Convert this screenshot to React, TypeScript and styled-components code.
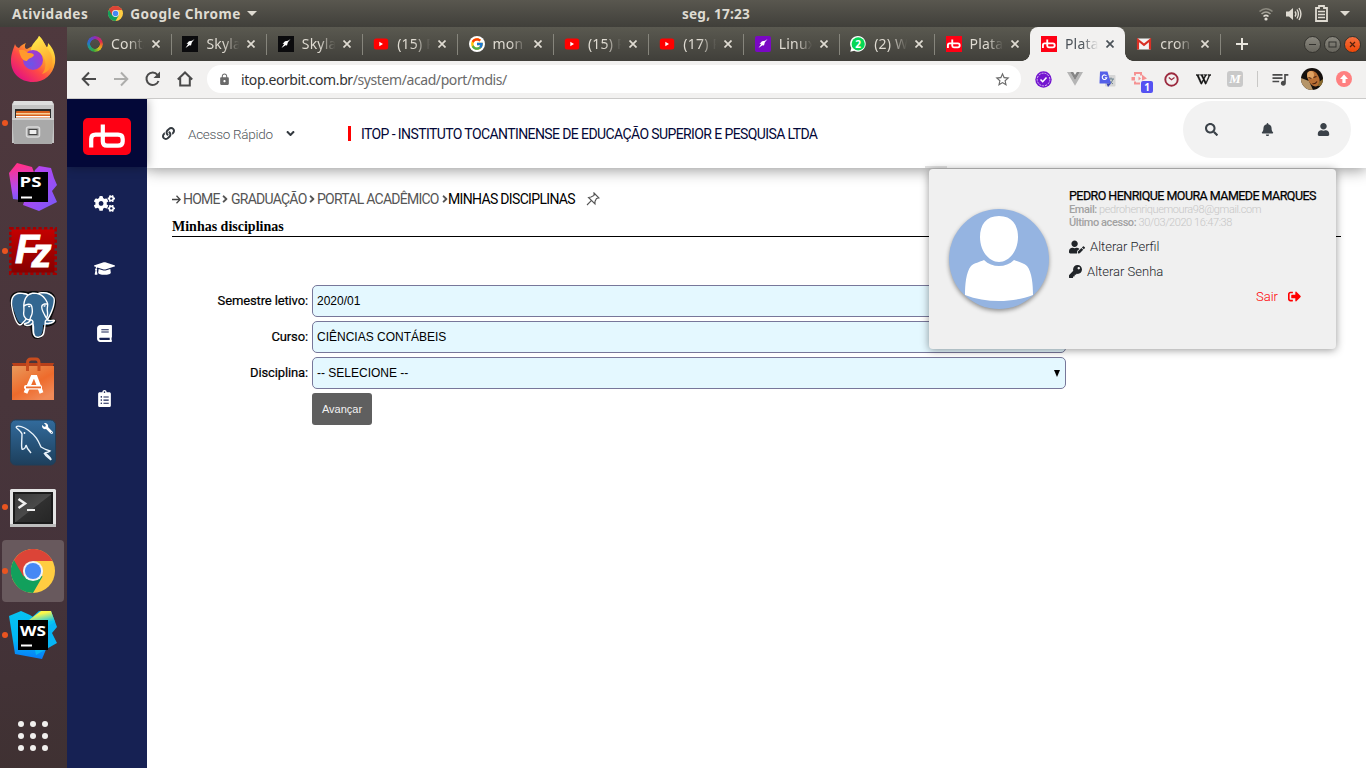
import React from 'react';
import styled, { createGlobalStyle } from 'styled-components';
import {
  FaLink, FaAngleDown, FaAngleRight, FaSearch, FaBell, FaUser, FaUserEdit, FaKey,
  FaSignOutAlt, FaCogs, FaGraduationCap, FaBook, FaClipboardList, FaWrench,
} from 'react-icons/fa';
import { MdStarBorder, MdLock, MdQueueMusic } from 'react-icons/md';
import { SiPostgresql, SiWikipedia } from 'react-icons/si';
import { FcGoogle } from 'react-icons/fc';

const Global = createGlobalStyle`
  * { box-sizing: border-box; }
  body { margin: 0; overflow: hidden; background: #fff; }
  svg { display: block; flex: none; }
`;

const UI = '"Noto Sans", "Open Sans", sans-serif';

/* ---------- desktop ---------- */
const Desktop = styled.div`
  width: 1366px;
  height: 768px;
  display: grid;
  grid-template: 27px 741px / 67px 1299px;
  font-family: ${UI};
`;
const TopBar = styled.header`
  grid-column: 1 / 3;
  display: grid;
  grid-template-columns: 670px auto 1fr;
  align-items: center;
  padding: 0 16px 0 12px;
  background: linear-gradient(#59574f, #403f3a);
  color: #dfdbd2;
  font-size: 13.6px;
  font-weight: 700;
`;
const TopLeft = styled.div`
  display: flex;
  align-items: center;
  height: 27px;
`;
const TopLabel = styled.span<{ $ls?: number; $ml?: number }>`
  letter-spacing: ${p => p.$ls ?? 0}px;
  margin-left: ${p => p.$ml ?? 0}px;
  line-height: 27px;
  white-space: nowrap;
`;
const TopRight = styled.div`
  display: flex;
  justify-content: flex-end;
  align-items: center;
  gap: 12px;
`;
const Caret = styled.i<{ $ml?: number }>`
  border: 5px solid transparent;
  border-top-color: #dfdbd2;
  border-bottom: 0;
  margin-left: ${p => p.$ml ?? 0}px;
`;

/* ---------- dock ---------- */
const Dock = styled.nav`
  display: flex;
  flex-direction: column;
  background: linear-gradient(175deg, #4f393e 0%, #48353b 50%, #45333a 75%, #3f3132 100%);
`;
const DockItem = styled.div`
  height: 64px;
  display: flex;
  align-items: center;
  position: relative;
  padding: 1px 3px 1px 2px;
`;
const DockTile = styled.div<{ $active?: boolean }>`
  width: 62px;
  height: 62px;
  border-radius: 4px;
  display: flex;
  align-items: center;
  justify-content: center;
  background: ${p => (p.$active ? '#68595d' : 'transparent')};
`;
const RunDot = styled.i`
  position: absolute;
  left: 2px;
  top: 29px;
  width: 6px;
  height: 6px;
  border-radius: 50%;
  background: #e95420;
`;
const AppGrid = styled.div`
  margin: 54px 0 0 18px;
  display: grid;
  grid-template-columns: repeat(3, 6px);
  gap: 6px;
`;
const AppDot = styled.i`
  width: 6px;
  height: 6px;
  border-radius: 50%;
  background: #f1f0ee;
`;

/* ---------- browser ---------- */
const Browser = styled.section`
  display: grid;
  grid-template-rows: 34px 38px 669px;
`;
const TabStrip = styled.div`
  display: flex;
  padding-left: 9px;
  background: linear-gradient(#5a5950, #403f3a);
`;
const Tab = styled.div<{ $active?: boolean; $bar?: boolean }>`
  position: relative;
  width: 95.4px;
  flex: none;
  display: flex;
  align-items: center;
  padding-left: 11px;
  color: ${p => (p.$active ? '#4b5258' : '#dfdbd2')};
  background: ${p => (p.$active ? '#f2f1f0' : 'transparent')};
  border-radius: 8px 8px 0 0;
  &::after {
    content: '';
    display: ${p => (p.$bar ? 'block' : 'none')};
    position: absolute;
    right: -0.6px;
    top: 7px;
    width: 1px;
    height: 21px;
    background: #86857c;
  }
`;
const TabFoot = styled.i<{ $right?: boolean }>`
  position: absolute;
  bottom: 0;
  ${p => (p.$right ? 'right: -8px' : 'left: -8px')};
  width: 8px;
  height: 8px;
  background: radial-gradient(circle at ${p => (p.$right ? '100% 0' : '0 0')}, transparent 7.5px, #f2f1f0 8px);
`;
const TabTitle = styled.span`
  width: 34px;
  margin: 0 7px 0 8px;
  overflow: hidden;
  white-space: nowrap;
  font-size: 14px;
  line-height: 34px;
  letter-spacing: 0.2px;
  mask-image: linear-gradient(90deg, #000 50%, transparent 98%);
`;
const NewTab = styled.div`
  display: flex;
  align-items: center;
  margin-left: 15px;
  color: #e8e5dd;
`;
const WindowButtons = styled.div`
  margin-left: auto;
  display: flex;
  align-items: center;
  gap: 3px;
  padding-right: 5px;
`;
const WinButton = styled.i<{ $close?: boolean }>`
  width: 17px;
  height: 17px;
  border-radius: 50%;
  border: 1px solid #35342f;
  background: ${p => (p.$close ? 'linear-gradient(#f4703f, #ee4707)' : 'linear-gradient(#8a887f, #67655d)')};
  display: flex;
  align-items: center;
  justify-content: center;
`;
const Toolbar = styled.div`
  display: flex;
  align-items: center;
  padding: 0 6px 1px 14px;
  background: #f2f1f0;
  border-bottom: 1px solid #cbcac9;
  color: #4a4a4a;
`;
const NavIcons = styled.div`
  display: flex;
  align-items: center;
  gap: 16px;
  width: 126px;
`;
const UrlBar = styled.div`
  width: 814px;
  height: 28px;
  border-radius: 14px;
  background: #fff;
  display: flex;
  align-items: center;
  padding: 0 10px 0 11px;
  color: #6a6a6a;
  font-size: 14px;
`;
const Url = styled.span`
  flex: 1;
  margin-left: 10px;
  letter-spacing: -0.41px;
  white-space: nowrap;
`;
const Host = styled.span`
  color: #333;
`;
const Extensions = styled.div`
  flex: 1;
  display: flex;
  align-items: center;
  margin-left: 6px;
`;
const Ext = styled.div`
  width: 32px;
  flex: none;
  height: 22px;
  display: flex;
  align-items: center;
  justify-content: center;
  position: relative;
`;
const ExtBadge = styled.b`
  position: absolute;
  right: 2px;
  bottom: -3px;
  width: 12px;
  height: 12px;
  border-radius: 2px;
  background: #5552f2;
  color: #fff;
  font-size: 10px;
  line-height: 12px;
  text-align: center;
`;
const ToolDivider = styled.i`
  width: 1px;
  height: 16px;
  margin: 0 6px;
  background: #c9c8c6;
`;
const MTile = styled.i`
  width: 16px;
  height: 16px;
  border-radius: 3px;
  background: #c9c9c9;
  color: #fff;
  font: italic 700 13px/16px "Liberation Serif", serif;
  text-align: center;
`;

/* ---------- site ---------- */
const Site = styled.div`
  display: grid;
  grid-template-columns: 80px 1219px;
  font-family: Roboto, sans-serif;
  min-height: 0;
`;
const Side = styled.aside`
  background: #162153;
  display: flex;
  flex-direction: column;
`;
const LogoBox = styled.div`
  height: 68px;
  margin-bottom: 1px;
  background: #030838;
  display: flex;
  justify-content: center;
  padding-top: 19px;
  box-shadow: 0 0 10px rgba(0, 0, 0, 0.35);
  clip-path: inset(0 -12px -12px 0);
  position: relative;
  z-index: 3;
`;
const SideLink = styled.div`
  height: 65px;
  display: flex;
  align-items: center;
  justify-content: center;
  padding: 6px 5px 0 0;
  color: #fff;
`;
const Main = styled.main`
  display: flex;
  flex-direction: column;
  min-width: 0;
  background: #fff;
`;
const SiteHeader = styled.header`
  position: relative;
  z-index: 2;
  height: 69px;
  flex: none;
  display: flex;
  align-items: center;
  padding: 0 15px 0 15px;
  background: #fff;
  box-shadow: 0 2px 14px rgba(0, 0, 0, 0.42);
  clip-path: inset(0 0 -300px 0);
`;
const QuickAccess = styled.div`
  display: flex;
  align-items: center;
  width: 186px;
  color: #343a40;
`;
const QuickLabel = styled.span`
  margin: 0 11px 0 13px;
  font-size: 13.5px;
  font-weight: 300;
  letter-spacing: -0.27px;
  color: #50555a;
`;
const Company = styled.div`
  display: flex;
  align-items: center;
  font-size: 14px;
  letter-spacing: -0.6px;
  color: #030838;
  white-space: nowrap;
  &::before {
    content: '';
    width: 3px;
    height: 15px;
    margin-right: 10px;
    background: #f00;
  }
`;
const ActionPill = styled.div`
  margin: -8px 0 0 auto;
  width: 168px;
  height: 57px;
  border-radius: 28.5px;
  background: #f2f2f2;
  display: flex;
  justify-content: space-around;
  align-items: center;
  color: #3b4249;
`;
const PopTab = styled.i`
  position: absolute;
  left: 778px;
  bottom: 0;
  width: 22px;
  height: 2px;
  background: #e2e2e2;
`;
const ProfileCard = styled.section`
  position: absolute;
  left: 782px;
  top: 70px;
  width: 407px;
  height: 180px;
  border-radius: 4px;
  background: #f0f0f0;
  box-shadow: 0 1px 9px rgba(0, 0, 0, 0.42);
  display: flex;
  padding: 20px;
`;
const Avatar = styled.div`
  width: 100px;
  height: 100px;
  flex: none;
  margin: 20px 20px 0 0;
  border-radius: 50%;
  overflow: hidden;
  background: #95b4e1;
  box-shadow: 0 2px 4px rgba(0, 0, 0, 0.4);
`;
const Profile = styled.div`
  flex: 1;
  display: flex;
  flex-direction: column;
  white-space: nowrap;
`;
const ProfileName = styled.div`
  font-size: 12.5px;
  line-height: 14px;
  letter-spacing: -0.54px;
  color: #000;
  -webkit-text-stroke: 0.25px #000;
`;
const ProfileMeta = styled.div<{ $ls: number }>`
  font-size: 11px;
  line-height: 13px;
  font-weight: 300;
  letter-spacing: ${p => p.$ls}px;
  color: #c6c6c6;
`;
const MetaKey = styled.b`
  font-weight: 500;
  color: #a2a2a2;
`;
const ProfileLink = styled.div<{ $top?: number }>`
  display: flex;
  align-items: center;
  gap: 5px;
  height: 25px;
  margin-top: ${p => p.$top ?? 0}px;
  font-size: 13px;
  font-weight: 300;
  color: #212529;
`;
const LogoutLink = styled(ProfileLink)`
  align-self: flex-end;
  gap: 10px;
  margin-right: 15px;
  color: #f00;
`;
const Content = styled.div`
  padding: 22px 25px 0;
`;
const Crumbs = styled.div`
  display: flex;
  align-items: center;
  height: 18px;
  font-size: 14px;
  color: #555;
`;
const Crumb = styled.span<{ $w: number; $ml?: number; $current?: boolean }>`
  width: ${p => p.$w}px;
  flex: none;
  margin-left: ${p => p.$ml ?? 0}px;
  white-space: nowrap;
  letter-spacing: ${p => (p.$current ? -0.67 : -0.75)}px;
  color: ${p => (p.$current ? '#000' : '#555')};
`;
const CrumbSep = styled.i`
  width: 6px;
  display: flex;
  justify-content: center;
`;
const PageTitle = styled.h1`
  margin: 8px 0 0;
  height: 21px;
  width: 1169px;
  border-bottom: 1px solid #000;
  font: 700 14px/22px "Liberation Serif", serif;
  color: #000;
`;
const Form = styled.form`
  margin: 48px 0 0;
  display: grid;
  grid-template-columns: 136px 754px;
  column-gap: 4px;
  row-gap: 4px;
`;
const Label = styled.label`
  text-align: right;
  font-size: 13px;
  line-height: 31px;
  letter-spacing: -0.13px;
  color: #000;
  -webkit-text-stroke: 0.2px #000;
`;
const Field = styled.div`
  height: 32px;
  display: flex;
  align-items: center;
  justify-content: space-between;
  padding: 0 5px 0 4px;
  border: 1px solid #77779a;
  border-radius: 5px;
  background: #e4f8ff;
  font: 12px/16px "Liberation Sans", sans-serif;
  color: #000;
`;
const FieldCaret = styled.i`
  border: 3.5px solid transparent;
  border-top: 7px solid #000;
  border-bottom: 0;
`;
const Submit = styled.button`
  grid-column: 2;
  width: 60px;
  height: 32px;
  padding: 0;
  border: 0;
  border-radius: 3px;
  background: #5f5f5f;
  color: #f2f2f2;
  font: 11px "Liberation Sans", sans-serif;
`;

/* ---------- drawings ---------- */
const ChromeLogo = ({ size }: { size: number }) => (
  <svg width={size} height={size} viewBox="0 0 48 48">
    <circle cx="24" cy="24" r="24" fill="#ffcd41" />
    <path d="M24 24 L3.2 12 A24 24 0 0 0 24 48 L34.4 30Z" fill="#12a05c" />
    <path d="M24 24 L13.6 30 L3.2 12 A24 24 0 0 1 45.4 13 H24Z" fill="#dc4437" />
    <circle cx="24" cy="24" r="11" fill="#f3f3f3" />
    <circle cx="24" cy="24" r="8.8" fill="#4688f4" />
  </svg>
);
const Firefox = () => (
  <svg width="48" height="48" viewBox="0 0 48 48">
    <defs>
      <linearGradient id="ffBody" x1="0.85" y1="0.1" x2="0.2" y2="0.9">
        <stop offset="0" stopColor="#fff14a" /><stop offset="0.35" stopColor="#ffa52a" />
        <stop offset="0.65" stopColor="#ff4a45" /><stop offset="1" stopColor="#e6177c" />
      </linearGradient>
      <linearGradient id="ffFlame" x1="0" y1="0" x2="0.3" y2="1">
        <stop offset="0" stopColor="#fff44f" /><stop offset="1" stopColor="#ff9a29" />
      </linearGradient>
      <radialGradient id="ffGlobe" cx="0.4" cy="0.7">
        <stop offset="0" stopColor="#6a55ea" /><stop offset="1" stopColor="#9a3ed3" />
      </radialGradient>
    </defs>
    <path d="M6 9 C7 12 8 12 10 13 C12 10 15 9 17 8 C15 11 16 14 18 14 C23 11 27 11 30 1 C35 5 35 9 37 12 C39 13 39 9 39 8 C45 14 47 21 46 28 C44 40 35 47 24 47 C11 47 2 38 2 26 C2 19 4 15 6 9Z" fill="url(#ffBody)" />
    <path d="M22 16 C22 8 28 6 30 1 C36 8 38 13 42 19 C46 29 40 37 33 39 C40 31 37 16 22 16Z" fill="url(#ffFlame)" />
    <circle cx="24" cy="25" r="10" fill="url(#ffGlobe)" />
    <path d="M10 15 C14 14 16 15 19 18 C21 18 24 18 25 20 C24 23 19 23 18 26 C13 26 11 21 10 15Z" fill="#ff9a2d" />
  </svg>
);
const FilesIcon = () => (
  <svg width="48" height="48" viewBox="0 0 48 48">
    <path d="M5 2 H43 L45 5 V44 H3 V5Z" fill="#c4c4c4" />
    <path d="M5 2 H43 L44 6 H4Z" fill="#dedede" />
    <rect x="6" y="10" width="36" height="11" fill="#2c2c2c" />
    <rect x="7" y="12" width="34" height="8" rx="1" fill="#d9621f" />
    <rect x="7" y="14" width="34" height="1.500" fill="#f7cf9a" />
    <rect x="7" y="17" width="34" height="1.500" fill="#fff" />
    <path d="M3 19 H45 L43 45 H5Z" fill="#a9a9a9" />
    <path d="M3 19 H45 V21 H3Z" fill="#cfcfcf" />
    <rect x="17.500" y="28" width="13" height="10" rx="2" fill="#a5a5a5" stroke="#dadada" strokeWidth="1.500" />
    <rect x="20" y="30.500" width="8" height="5" fill="#eee" stroke="#444" />
  </svg>
);
const IdeText = styled.text`
  font: 700 15px "Open Sans", sans-serif;
  fill: #fff;
`;
const PhpStorm = () => (
  <svg width="48" height="48" viewBox="0 0 48 48">
    <defs><linearGradient id="psA" x1="0" y1="0" x2="1" y2="1"><stop offset="0.3" stopColor="#b345f1" /><stop offset="1" stopColor="#765af8" /></linearGradient>
    <linearGradient id="psB" x1="0.2" y1="0" x2="0.3" y2="1"><stop offset="0.1" stopColor="#ff318c" /><stop offset="0.7" stopColor="#b24bf0" /><stop offset="1" stopColor="#765af8" /></linearGradient></defs>
    <path d="M26 7 L30 3 L42 5 L45 15 L48 22 L43 28 L48 39 L30 48 L14 42Z" fill="url(#psA)" />
    <path d="M0 10 L8 0 L23 4 L26 12 L12 37 L4 36Z" fill="url(#psB)" />
    <rect x="9" y="9" width="30" height="30" fill="#000" />
    <IdeText x="10.500" y="24" textLength="22" lengthAdjust="spacingAndGlyphs">PS</IdeText>
    <rect x="12" y="33.500" width="11" height="2" fill="#fff" />
  </svg>
);
const WebStorm = () => (
  <svg width="48" height="48" viewBox="0 0 48 48">
    <defs><linearGradient id="wsA" x1="0" y1="0" x2="0" y2="1"><stop offset="0" stopColor="#07c3f2" /><stop offset="0.6" stopColor="#00b7f5" /><stop offset="1" stopColor="#087cfa" /></linearGradient>
    <linearGradient id="wsB" x1="0.3" y1="0" x2="0.7" y2="1"><stop offset="0.2" stopColor="#fcf84a" /><stop offset="0.8" stopColor="#07c3f2" /></linearGradient></defs>
    <path d="M0 5 L12 0 L21 4 L30 10 L38 36 L33 48 L6 43Z" fill="url(#wsA)" />
    <path d="M20 9 L30 0 H42 L48 16 L43 22 L48 32 L27 44Z" fill="#07b5f5" />
    <path d="M20 9 L32 0 H42 L46 11 L39 15 V9Z" fill="url(#wsB)" />
    <rect x="9" y="9" width="30" height="30" fill="#000" />
    <IdeText x="11" y="24.500" textLength="26" lengthAdjust="spacingAndGlyphs">WS</IdeText>
    <rect x="12" y="33.500" width="11" height="2" fill="#fff" />
  </svg>
);
const FzText = styled.text`
  font: italic 700 40px "Liberation Sans", sans-serif;
  fill: #fff;
  stroke: #fff;
  stroke-width: 0.8px;
`;
const FileZilla = () => (
  <svg width="48" height="48" viewBox="0 0 48 48">
    <defs><linearGradient id="fz" x1="0" y1="0" x2="0" y2="1"><stop offset="0" stopColor="#c40000" /><stop offset="1" stopColor="#860000" /></linearGradient></defs>
    <rect x="1.500" y="1.500" width="45" height="45" fill="none" stroke="#a30000" strokeWidth="3" strokeDasharray="3.2 2.400" />
    <rect x="2.500" y="2.500" width="43" height="43" fill="url(#fz)" />
    <FzText x="6" y="36">F<tspan dx="-8" dy="4">z</tspan></FzText>
  </svg>
);
const Elephant = styled.div`
  width: 48px;
  height: 48px;
  display: grid;
  place-items: center;
  > * { grid-area: 1 / 1; }
`;
const Postgres = () => (
  <Elephant>
    <svg width="48" height="48" viewBox="0 0 48 48">
      <path d="M7 2 C12 0 16 1 19 2 C24 0 28 1 30 2 C35 0 41 0 44 4 C49 10 44 20 41 28 C44 29 47 29 46 31 C43 35 38 35 35 35 C35 43 33 47 28 47 C23 47 23 41 22 34 C16 36 15 34 14 33 C8 35 6 26 3 17 C1 10 1 4 7 2Z" fill="#336791" stroke="#0b0b0b" strokeWidth="2" />
    </svg>
    <SiPostgresql size={46} color="#fff" />
  </Elephant>
);
const Software = () => (
  <svg width="48" height="48" viewBox="0 0 48 48">
    <defs><linearGradient id="bag" x1="0" y1="0" x2="0.7" y2="1"><stop offset="0" stopColor="#e99a5c" /><stop offset="0.6" stopColor="#ee6b2c" /><stop offset="1" stopColor="#f08a58" /></linearGradient></defs>
    <path d="M3 8 H45 L43 13 H5Z" fill="#b8401a" />
    <path d="M3 11 H45 V45 H3Z" fill="url(#bag)" />
    <path d="M18.500 16 V8 Q18.500 4 22 4 H27 Q30 4 30 8 V16" fill="none" stroke="#c84c1e" strokeWidth="3" />
    <path d="M16.500 38 L23.500 22 H26.500 L32.500 38" fill="none" stroke="#fff" strokeWidth="4" />
    <rect x="15" y="30" width="18" height="4.500" rx="2" fill="#fff" />
    <rect x="17" y="31.500" width="15" height="1.800" fill="#ea6a2c" />
  </svg>
);
const Workbench = () => (
  <svg width="48" height="48" viewBox="0 0 48 48">
    <defs><linearGradient id="wb" x1="0" y1="0" x2="0" y2="1"><stop offset="0" stopColor="#326b9c" /><stop offset="1" stopColor="#1d3f5c" /></linearGradient></defs>
    <rect x="1.500" y="1" width="45" height="45" rx="5" fill="url(#wb)" stroke="#213f59" />
    <path d="M7 8 C9 6 15 8 19 11 C27 17 29 21 32 28 C35 30 38 31 41 32 C39 34 37 33 36 34 C38 36 42 38 42 41 M35 34 C37 38 40 39 42 41 M7 8 C8 10 12 12 13 15 C13 22 12 26 13 30 C15 31 17 28 17 26 C18 30 20 32 22 34 M22 34 L19 30" fill="none" stroke="#e8f2fa" strokeWidth="1.400" />
    <circle cx="15.500" cy="14" r="0.900" fill="#fff" />
    <g transform="translate(33 4) scale(-1 1) translate(-11 0)"><FaWrench size={11} color="#fff" /></g>
  </svg>
);
const Terminal = () => (
  <svg width="48" height="48" viewBox="0 0 48 48">
    <defs><linearGradient id="term" x1="0" y1="0" x2="1" y2="1"><stop offset="0" stopColor="#3a3a3a" /><stop offset="0.5" stopColor="#4a4a4a" /><stop offset="0.52" stopColor="#303030" /><stop offset="1" stopColor="#262626" /></linearGradient></defs>
    <rect x="1" y="6" width="46" height="38" rx="1.500" fill="#e4e4e4" />
    <rect x="1" y="41" width="46" height="3" fill="#bdbdbd" />
    <rect x="4" y="9" width="40" height="32" fill="#1b1b1b" />
    <rect x="6" y="11" width="36" height="28" fill="url(#term)" />
    <path d="M9.500 16 L16 20.500 L9.500 25" fill="none" stroke="#eee" strokeWidth="2.500" />
    <path d="M18 27 H26" stroke="#eee" strokeWidth="2" />
  </svg>
);
const RbMark = ({ w, h, r }: { w: number; h: number; r: number }) => (
  <svg width={w} height={h} viewBox={w > 20 ? '0 0 48 37' : '3 -3 43 43'}>
    {w > 20 ? <rect width="48" height="37" rx={r} fill="#ff0014" /> : <rect x="3" y="-3" width="43" height="43" rx={r} fill="#ff0014" />}
    <path d="M8.200 29.500 V21 Q8.200 16.700 12.500 16.700 H35 Q39.700 16.700 39.700 21 V23.500 Q39.700 27.700 35 27.700 H24 Q19.800 27.700 19.800 23.500 V6.500" fill="none" stroke="#fff" strokeWidth={w > 20 ? 4.2 : 5} />
  </svg>
);

/* ---------- favicons ---------- */
const RingFav = styled.i`
  width: 16px;
  height: 16px;
  border-radius: 50%;
  background: conic-gradient(#8e2bb8, #e02b4a 70deg, #f08a1f 110deg, #cfc21f 140deg, #35a83a 190deg, #1e9c8c 240deg, #2a6ad0 290deg, #8e2bb8);
  mask: radial-gradient(circle, transparent 4.5px, #000 5px);
`;
const BirdFav = ({ bg, r }: { bg: string; r: number }) => (
  <svg width="16" height="16" viewBox="0 0 16 16">
    <rect width="16" height="16" rx={r} fill={bg} />
    <path d="M12.500 3 L10 4.800 L7 5.200 L4.500 8 L6.300 7.800 L3.500 12 L7.500 9.200 L9 9.500 L9.800 6.500Z" fill="#fff" />
  </svg>
);
const TubeFav = () => (
  <svg width="16" height="16" viewBox="0 0 16 16">
    <rect x="0.800" y="2.600" width="14.400" height="11" rx="2.500" fill="#f00" />
    <path d="M6.300 5.800 L10 8 L6.300 10.200Z" fill="#fff" />
  </svg>
);
const GoogleFav = styled.i`
  width: 16px;
  height: 16px;
  border-radius: 50%;
  background: #fff;
  display: flex;
  align-items: center;
  justify-content: center;
`;
const ChatDigit = styled.text`
  font: 700 10px "Noto Sans", sans-serif;
  fill: #fff;
`;
const ChatFav = () => (
  <svg width="16" height="16" viewBox="0 0 16 16">
    <path d="M0.300 15.700 L1.300 12 A7.800 7.800 0 1 1 4.200 14.700Z" fill="#fff" />
    <circle cx="8.200" cy="7.900" r="6.600" fill="#06d755" />
    <ChatDigit x="5.300" y="11.600">2</ChatDigit>
  </svg>
);
const MailFav = () => (
  <svg width="16" height="16" viewBox="0 0 16 16">
    <rect x="1" y="2.500" width="14" height="11" rx="1" fill="#f4f4f4" />
    <path d="M2 13.500 V4 L8 8.800 L14 4 V13.500" fill="none" stroke="#d93025" strokeWidth="2.200" />
  </svg>
);
const CloseX = () => (
  <svg width="8" height="8" viewBox="0 0 8 8"><path d="M0.500 0.500 L7.500 7.500 M7.500 0.500 L0.500 7.500" stroke="currentColor" strokeWidth="1.700" /></svg>
);

const dock: { icon: React.ReactNode; running?: boolean; active?: boolean }[] = [
  { icon: <Firefox /> },
  { icon: <FilesIcon />, running: true },
  { icon: <PhpStorm /> },
  { icon: <FileZilla />, running: true },
  { icon: <Postgres /> },
  { icon: <Software /> },
  { icon: <Workbench /> },
  { icon: <Terminal />, running: true },
  { icon: <ChromeLogo size={44} />, running: true, active: true },
  { icon: <WebStorm />, running: true },
];

const tabs: { icon: React.ReactNode; title: string; active?: boolean; bar?: boolean }[] = [
  { icon: <RingFav />, title: 'Conta', bar: true },
  { icon: <BirdFav bg="#0b0b0d" r={0} />, title: 'Skylab', bar: true },
  { icon: <BirdFav bg="#0b0b0d" r={0} />, title: 'Skylab', bar: true },
  { icon: <TubeFav />, title: '(15) R', bar: true },
  { icon: <GoogleFav><FcGoogle size={14} /></GoogleFav>, title: 'mon', bar: true },
  { icon: <TubeFav />, title: '(15) R', bar: true },
  { icon: <TubeFav />, title: '(17) R', bar: true },
  { icon: <BirdFav bg="#7a08c4" r={2} />, title: 'Linux', bar: true },
  { icon: <ChatFav />, title: '(2) W', bar: true },
  { icon: <RbMark w={16} h={16} r={0} />, title: 'Plata' },
  { icon: <RbMark w={16} h={16} r={0} />, title: 'Plata', active: true },
  { icon: <MailFav />, title: 'cron', bar: true },
];

const StatusIcons = () => (
  <>
    <svg width="16" height="14" viewBox="0 0 16 14" fill="none" strokeWidth="1.600">
      <path d="M1.500 4.500 Q8 -1 14.500 4.500" stroke="#8b897f" />
      <path d="M3.500 7 Q8 3 12.500 7" stroke="#a5a298" />
      <path d="M5.500 9.500 Q8 7.200 10.500 9.500" stroke="#dfdbd2" />
      <circle cx="8" cy="12" r="1.600" fill="#dfdbd2" />
    </svg>
    <svg width="16" height="16" viewBox="0 0 16 16" fill="none" stroke="#dfdbd2" strokeWidth="1.400">
      <path d="M0 5.500 H3 L7 2 V14 L3 10.500 H0Z" fill="#dfdbd2" stroke="none" />
      <path d="M9 5.500 Q10.800 8 9 10.500 M11 3.500 Q13.800 8 11 12.500 M13 2 Q16.800 8 13 14" />
    </svg>
    <svg width="14" height="17" viewBox="1 0 14 17" fill="none" stroke="#dfdbd2">
      <path d="M3 3 H6 V1 H11 V3 H14 V16 H3Z" strokeWidth="1.800" />
      <path d="M5 6.500 H12 M5 9.500 H12 M5 12.500 H12" strokeWidth="1.600" />
    </svg>
  </>
);

const MinusGlyph = () => <svg width="9" height="9" viewBox="0 0 9 9"><path d="M1 4.500 H8" stroke="#33322e" /></svg>;
const SquareGlyph = () => <svg width="9" height="9" viewBox="0 0 9 9"><rect x="1" y="2" width="7" height="5" fill="none" stroke="#33322e" /></svg>;
const CrossGlyph = () => <svg width="9" height="9" viewBox="0 0 9 9"><path d="M2 2 L7 7 M7 2 L2 7" stroke="#51200c" strokeWidth="1.200" /></svg>;

const ExtensionIcons = () => (
  <Extensions>
    <Ext>
      <svg width="17" height="17" viewBox="0 0 17 17"><circle cx="8.500" cy="8.500" r="8.200" fill="#7416d0" /><circle cx="8.500" cy="8.500" r="6.300" fill="none" stroke="#d9bff3" strokeDasharray="2 1" /><path d="M5.500 8.500 L7.700 10.700 L11.500 6.500" fill="none" stroke="#fff" strokeWidth="1.600" /></svg>
    </Ext>
    <Ext>
      <svg width="16" height="14" viewBox="0 0 16 14"><path d="M0 0 H3.200 L8 8.300 L12.800 0 H16 L8 13.700Z" fill="#b5b5b5" /><path d="M3.200 0 H6.200 L8 3 L9.800 0 H12.800 L8 8.300Z" fill="#858585" /></svg>
    </Ext>
    <Ext>
      <svg width="17" height="17" viewBox="0 0 17 17"><rect x="6" y="4" width="10.500" height="11.500" rx="1" fill="#d5d5d5" /><path d="M9 8 H15 M12 6.500 V8 M14 8 Q13 12 10 13 M10.500 10 L14 13" stroke="#6f8590" fill="none" /><path d="M1 0.500 H8.500 L12 12.500 H1 Q0.500 12.500 0.500 12Z" fill="#5560e8" /><path d="M7.500 12.500 H12 L9 16Z" fill="#3a44b5" /><path d="M7.500 5 A2.300 2.300 0 1 0 7.800 6.700 H5.800" fill="none" stroke="#fff" strokeWidth="1.100" /></svg>
    </Ext>
    <Ext>
      <svg width="18" height="16" viewBox="0 0 18 16" fill="none" stroke="#f59292" strokeWidth="2"><path d="M5 4.500 V2 H11 V4.500 M5 10.500 V12.500 H10" /><rect x="1.500" y="6" width="3.500" height="3.500" fill="#f59292" stroke="none" /><path d="M8.500 5.500 L11 7.500 L8.500 9.500Z" fill="#f59292" stroke="none" /><path d="M12 3.500 L17 7.500 L12 9.500Z" fill="#f59292" stroke="none" /></svg>
      <ExtBadge>1</ExtBadge>
    </Ext>
    <Ext>
      <svg width="15" height="15" viewBox="0 0 15 15" fill="none" stroke="#9c2a3e"><circle cx="7.500" cy="7.500" r="6.200" strokeWidth="1.900" /><path d="M4.800 5.500 L7.500 7.800 L10.500 5.500" strokeWidth="1.200" /></svg>
    </Ext>
    <Ext><SiWikipedia size={15} color="#0b0b0b" stroke="#0b0b0b" strokeWidth={1} /></Ext>
    <Ext><MTile>M</MTile></Ext>
    <ToolDivider />
    <Ext><MdQueueMusic size={20} /></Ext>
    <Ext>
      <svg width="22" height="22" viewBox="0 0 22 22">
        <defs><clipPath id="face"><circle cx="11" cy="11" r="11" /></clipPath></defs>
        <g clipPath="url(#face)">
          <rect width="22" height="22" fill="#15100d" />
          <path d="M0 10 L8 13 L12 22 H0Z" fill="#b59468" />
          <ellipse cx="12.500" cy="10.500" rx="5.500" ry="8.500" fill="#b96f34" transform="rotate(-28 12.500 10.500)" />
          <ellipse cx="9.500" cy="7" rx="3.500" ry="4" fill="#e0a262" />
          <path d="M4 6 C5 1 14 0 17 6 L14 3.500 C10 2 7 3 4 6Z" fill="#241510" />
          <path d="M7.500 9.500 L10.500 10.500 M12.500 9.500 L15.500 8.500 M11.500 15.500 Q14 16.500 16 13.500" stroke="#4a220f" strokeWidth="1.200" fill="none" />
          <path d="M18 14 L22 11 V18 H17Z" fill="#8a6a2c" />
        </g>
      </svg>
    </Ext>
    <Ext>
      <svg width="16" height="16" viewBox="0 0 16 16"><circle cx="8" cy="8" r="8" fill="#ff8080" /><path d="M8 3.500 L12 8 H9.600 V12 H6.400 V8 H4Z" fill="#fff" /></svg>
    </Ext>
  </Extensions>
);

export default function App() {
  return (
    <Desktop>
      <Global />
      <TopBar>
        <TopLeft>
          <TopLabel $ls={0.48}>Atividades</TopLabel>
          <TopLabel $ml={20}><ChromeLogo size={15} /></TopLabel>
          <TopLabel $ml={7} $ls={0.48}>Google Chrome</TopLabel>
          <Caret $ml={6} />
        </TopLeft>
        <TopLabel $ls={0.2}>seg, 17:23</TopLabel>
        <TopRight><StatusIcons /><Caret /></TopRight>
      </TopBar>

      <Dock>
        {dock.map((d, i) => (
          <DockItem key={i}>
            {d.running && <RunDot />}
            <DockTile $active={d.active}>{d.icon}</DockTile>
          </DockItem>
        ))}
        <AppGrid>{Array.from({ length: 9 }, (_, i) => <AppDot key={i} />)}</AppGrid>
      </Dock>

      <Browser>
        <TabStrip>
          {tabs.map((t, i) => (
            <Tab key={i} $active={t.active} $bar={t.bar}>
              {t.active && <TabFoot />}
              {t.icon}
              <TabTitle>{t.title}</TabTitle>
              <CloseX />
              {t.active && <TabFoot $right />}
            </Tab>
          ))}
          <NewTab>
            <svg width="12" height="12" viewBox="0 0 12 12"><path d="M6 0 V12 M0 6 H12" stroke="currentColor" strokeWidth="2" /></svg>
          </NewTab>
          <WindowButtons>
            <WinButton><MinusGlyph /></WinButton>
            <WinButton><SquareGlyph /></WinButton>
            <WinButton $close><CrossGlyph /></WinButton>
          </WindowButtons>
        </TabStrip>

        <Toolbar>
          <NavIcons>
            <svg width="16" height="16" viewBox="0 0 16 16" fill="none" stroke="#4a4a4a" strokeWidth="2"><path d="M15 8 H2 M8 1.500 L1.700 8 L8 14.500" /></svg>
            <svg width="16" height="16" viewBox="0 0 16 16" fill="none" stroke="#adadab" strokeWidth="2"><path d="M1 8 H14 M8 1.500 L14.300 8 L8 14.500" /></svg>
            <svg width="16" height="16" viewBox="0 0 16 16"><path d="M13.500 10 A6.200 6.200 0 1 1 12.500 3.800" fill="none" stroke="#4a4a4a" strokeWidth="2" /><path d="M15 0.500 V7 H8.500Z" fill="#4a4a4a" /></svg>
            <svg width="16" height="16" viewBox="0 0 16 16" fill="none" stroke="#4a4a4a" strokeWidth="2"><path d="M0.800 8.500 L8 1.500 L15.200 8.500 M3.200 7 V14.500 H12.800 V7" /></svg>
          </NavIcons>
          <UrlBar>
            <MdLock size={13} />
            <Url><Host>itop.eorbit.com.br</Host>/system/acad/port/mdis/</Url>
            <MdStarBorder size={17} />
          </UrlBar>
          <ExtensionIcons />
        </Toolbar>

        <Site>
          <Side>
            <LogoBox><RbMark w={48} h={37} r={5} /></LogoBox>
            <SideLink><FaCogs size={21} /></SideLink>
            <SideLink><FaGraduationCap size={21} /></SideLink>
            <SideLink><FaBook size={17} /></SideLink>
            <SideLink><FaClipboardList size={17} /></SideLink>
          </Side>
          <Main>
            <SiteHeader>
              <QuickAccess>
                <FaLink size={13} />
                <QuickLabel>Acesso Rápido</QuickLabel>
                <FaAngleDown size={13} />
              </QuickAccess>
              <Company>ITOP - INSTITUTO TOCANTINENSE DE EDUCAÇÃO SUPERIOR E PESQUISA LTDA</Company>
              <ActionPill>
                <FaSearch size={13} />
                <FaBell size={13} />
                <FaUser size={13} />
              </ActionPill>
              <PopTab />
              <ProfileCard>
                <Avatar>
                  <svg width="100" height="100" viewBox="0 0 100 100">
                    <path d="M50 7 C63 7 69 16 69 28 C69 42 60 53 50 53 C40 53 31 42 31 28 C31 16 37 7 50 7Z M35 51 C43 59 57 59 65 51 C69 53 75 54 78 57 C83 63 84 76 84 86 C63 94 37 94 16 86 C16 76 17 63 22 57 C25 54 31 53 35 51Z" fill="#fff" />
                  </svg>
                </Avatar>
                <Profile>
                  <ProfileName>PEDRO HENRIQUE MOURA MAMEDE MARQUES</ProfileName>
                  <ProfileMeta $ls={-0.4}><MetaKey>Email:</MetaKey> pedrohenriquemoura98@gmail.com</ProfileMeta>
                  <ProfileMeta $ls={-0.42}><MetaKey>Último acesso:</MetaKey> 30/03/2020 16:47:38</ProfileMeta>
                  <ProfileLink $top={5}><FaUserEdit size={16} />Alterar Perfil</ProfileLink>
                  <ProfileLink><FaKey size={13} />Alterar Senha</ProfileLink>
                  <LogoutLink>Sair <FaSignOutAlt size={13} /></LogoutLink>
                </Profile>
              </ProfileCard>
            </SiteHeader>

            <Content>
              <Crumbs>
                <svg width="9" height="9" viewBox="0 0 9 9" fill="none" stroke="#444" strokeWidth="1.300"><path d="M0 4.500 H8 M4.500 0.800 L8.200 4.500 L4.500 8.200" /></svg>
                <Crumb $w={39} $ml={2}>HOME</Crumb>
                <CrumbSep><FaAngleRight size={12} /></CrumbSep>
                <Crumb $w={78} $ml={3}>GRADUAÇÃO</Crumb>
                <CrumbSep><FaAngleRight size={12} /></CrumbSep>
                <Crumb $w={125} $ml={2}>PORTAL ACADÊMICO</Crumb>
                <CrumbSep><FaAngleRight size={12} /></CrumbSep>
                <Crumb $w={138} $current>MINHAS DISCIPLINAS</Crumb>
                <svg width="14" height="14" viewBox="0 0 14 14" fill="none" stroke="#555" strokeWidth="1.100"><path d="M8 1 L13 6 L10.500 6.500 L9 9.500 L9 12 L2.500 5.500 L5 5 L8 3.500Z M5.300 8.700 L1 13" /></svg>
              </Crumbs>
              <PageTitle>Minhas disciplinas</PageTitle>
              <Form>
                <Label>Semestre letivo:</Label><Field>2020/01<FieldCaret /></Field>
                <Label>Curso:</Label><Field>CIÊNCIAS CONTÁBEIS<FieldCaret /></Field>
                <Label>Disciplina:</Label><Field>-- SELECIONE --<FieldCaret /></Field>
                <Submit type="button">Avançar</Submit>
              </Form>
            </Content>
          </Main>
        </Site>
      </Browser>
    </Desktop>
  );
}
